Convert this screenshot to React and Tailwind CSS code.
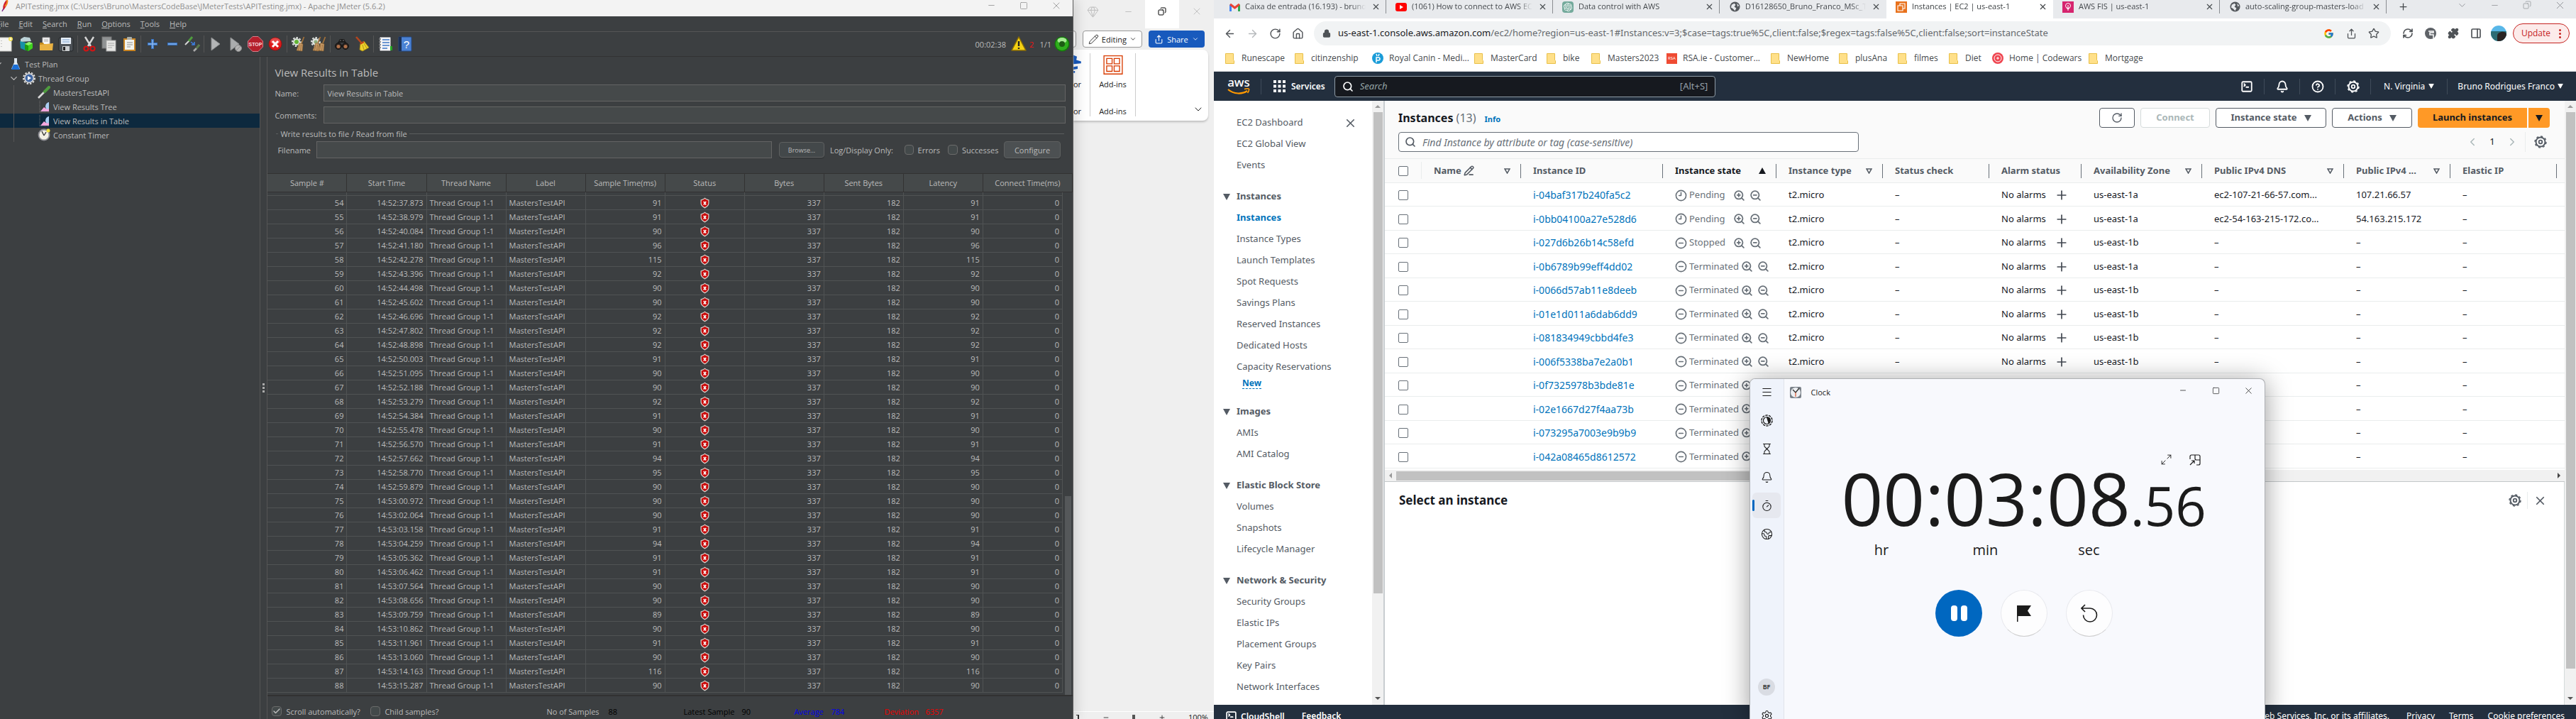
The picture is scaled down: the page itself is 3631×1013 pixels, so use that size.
import {
  ArrowLeft, ArrowRight, RotateCw, House, Lock, Star, Share, Puzzle, PanelRight, Search, Bell, CircleHelp,
  Clock9, CircleMinus, ZoomIn, ZoomOut, Plus, X, Minus, ChevronDown, ChevronLeft, ChevronRight, Copy, Pencil,
  PencilLine, Gem, Hourglass, Timer, Settings, Menu, RefreshCw, Square, SquareTerminal, Check, Maximize2, Earth,
} from "lucide-react";
import { FcGoogle } from "react-icons/fc";
import { SiOpenai } from "react-icons/si";

/* ---------- JMeter ---------- */

const samples = [
  [54, "14:52:37.873", 91], [55, "14:52:38.979", 91], [56, "14:52:40.084", 90], [57, "14:52:41.180", 96],
  [58, "14:52:42.278", 115], [59, "14:52:43.396", 92], [60, "14:52:44.498", 90], [61, "14:52:45.602", 90],
  [62, "14:52:46.696", 92], [63, "14:52:47.802", 92], [64, "14:52:48.898", 92], [65, "14:52:50.003", 91],
  [66, "14:52:51.095", 90], [67, "14:52:52.188", 90], [68, "14:52:53.279", 92], [69, "14:52:54.384", 91],
  [70, "14:52:55.478", 90], [71, "14:52:56.570", 91], [72, "14:52:57.662", 94], [73, "14:52:58.770", 95],
  [74, "14:52:59.879", 90], [75, "14:53:00.972", 90], [76, "14:53:02.064", 90], [77, "14:53:03.158", 91],
  [78, "14:53:04.259", 94], [79, "14:53:05.362", 91], [80, "14:53:06.462", 91], [81, "14:53:07.564", 90],
  [82, "14:53:08.656", 90], [83, "14:53:09.759", 89], [84, "14:53:10.862", 90], [85, "14:53:11.961", 91],
  [86, "14:53:13.060", 90], [87, "14:53:14.163", 116], [88, "14:53:15.287", 90],
];

const sampleColumns = ["Sample #", "Start Time", "Thread Name", "Label", "Sample Time(ms)", "Status", "Bytes", "Sent Bytes", "Latency", "Connect Time(ms)"];

const Svg = ({ children, size = 22, box = 22 }) => (
  <svg width={size} height={size} viewBox={`0 0 ${box} ${box}`} fill="none" aria-hidden="true">{children}</svg>
);

const Broom = ({ x = 0 }) => (
  <g transform={`translate(${x} 0)`}>
    <path d="M18.500 1 L15 10" stroke="#a0703a" strokeWidth="1.800" />
    <path d="M12 9.500 L17 11 L16 21 L8 20 Z" fill="#c89a66" stroke="#8a5f2c" strokeWidth=".6" />
    <path d="M12 12 L10.500 20 M14.500 12 L13.500 20.500" stroke="#8a5f2c" strokeWidth=".7" />
  </g>
);

const GearShape = ({ cx, cy, r, fill }) => (
  <g>
    <circle cx={cx} cy={cy} r={r - 1} fill={fill} />
    <circle cx={cx} cy={cy} r={r} stroke={fill} strokeWidth="2" strokeDasharray="2.500 2" fill="none" />
  </g>
);

const toolIcons = {
  New: <Svg><rect x="1" y="2" width="17" height="19" fill="#f4f4f2" stroke="#c9c9c4" /><circle cx="17" cy="4" r="3" fill="#f3e25a" /><circle cx="17" cy="4" r="1.300" fill="#fffce0" /><path d="M4 6v1M4 10v1M4 14v1" stroke="#999" /></Svg>,
  Templates: <Svg><path d="M3 4 L8 1 L16 2 L18 7 L3 8Z" fill="#bcd3d8" /><path d="M2 7 L10 9 V20 L3 17Z" fill="#1791a8" /><path d="M9 11 L15 8 L20 10 L20 17 L14 21 L9 19Z" fill="#3fd21f" /><path d="M9 11 L14 13 V21 L9 19Z" fill="#1f9a12" /><path d="M9 11 L15 8 L20 10 L14 13Z" fill="#8df06c" /></Svg>,
  Open: <Svg><path d="M6 2 H16 V12 H6Z" fill="#f6f6f6" stroke="#b9b9b9" /><path d="M8 5h6M8 7h6" stroke="#aaa" /><path d="M2 9 H7 L8 11 H20 V20 H2Z" fill="#c48a1c" /><path d="M2 12 L21 10 L20 20 H2Z" fill="#e9b243" /></Svg>,
  Save: <Svg><rect x="1" y="2" width="20" height="19" rx="2" fill="#4d5257" stroke="#25282b" /><rect x="4" y="2" width="14" height="9" fill="#e7eef6" /><path d="M6 5h10M6 8h10" stroke="#7ba0cd" /><rect x="6" y="14" width="10" height="7" fill="#c9ccce" /><rect x="7" y="15" width="3" height="5" fill="#222" /></Svg>,
  Cut: <Svg><path d="M5 1 L13 14 M17 1 L9 14" stroke="#d7d7d7" strokeWidth="2.400" /><circle cx="6.500" cy="17.500" r="3" stroke="#d41414" strokeWidth="2.200" /><circle cx="15.500" cy="17.500" r="3" stroke="#d41414" strokeWidth="2.200" /></Svg>,
  Copy: <Svg><rect x="1" y="1" width="13" height="16" fill="#8f9293" stroke="#777" /><rect x="7" y="6" width="13" height="15" fill="#e8e8e6" stroke="#aaa" /><path d="M9 10h9M9 13h9M9 16h6" stroke="#a5a5a5" /></Svg>,
  Paste: <Svg><rect x="3" y="3" width="17" height="18" fill="#c98422" /><rect x="5" y="5" width="13" height="14" fill="#f3f3ee" /><rect x="8" y="1" width="7" height="4" rx="1" fill="#a9aca5" /><path d="M8 9h8M8 12h8M8 15h5" stroke="#8b8b8b" /></Svg>,
  Expand: <Svg><path d="M11 4v14M4 11h14" stroke="#3570be" strokeWidth="4" /><path d="M11 5v12M5 11h12" stroke="#8db8ee" strokeWidth="1.400" /></Svg>,
  Collapse: <Svg><path d="M4 11h14" stroke="#3570be" strokeWidth="4" /><path d="M5 11h12" stroke="#8db8ee" strokeWidth="1.400" /></Svg>,
  Toggle: <Svg><path d="M1 12 L7 6" stroke="#d6d6d6" strokeWidth="2" /><path d="M6 7 L11 1" stroke="#4f9c3f" strokeWidth="3" /><path d="M9 8 L14 12 M14 8v4h-4" stroke="#3d7fe0" strokeWidth="1.600" /><path d="M13 21 L17 17" stroke="#a9a9a9" strokeWidth="2.600" /><path d="M17 17 L21 12" stroke="#5b7b4c" strokeWidth="3" /></Svg>,
  Start: <Svg><path d="M5 2 L17 11 L5 20Z" fill="#b3b5b6" stroke="#8e9091" /></Svg>,
  "Start no pauses": <Svg><path d="M4 2 L16 11 L4 20Z" fill="#aaacad" stroke="#8e9091" /><circle cx="15" cy="17" r="4.500" fill="#b4b4b4" stroke="#8c8c8c" /><path d="M12 20 L18 14" stroke="#8c8c8c" /></Svg>,
  Stop: <Svg><path d="M7 0.500 H15 L21.500 7 V15 L15 21.500 H7 L0.500 15 V7Z" fill="#b51f2c" stroke="#d6808a" /><text x="11" y="14" textAnchor="middle" fontSize="7" fontWeight="700" fontFamily="Liberation Sans" fill="#f6dfe1">STOP</text></Svg>,
  Shutdown: <Svg><circle cx="11" cy="11" r="9" fill="#dc1b1b" stroke="#9e0f0f" /><ellipse cx="11" cy="7" rx="7" ry="4.500" fill="#ef6a6a" opacity=".6" /><path d="M7 7 L15 15 M15 7 L7 15" stroke="#fff" strokeWidth="3" /></Svg>,
  Clear: <Svg><GearShape cx={8} cy={8} r={6} fill="#dfe3df" /><circle cx="8" cy="8" r="3" fill="#62b334" /><Broom /></Svg>,
  "Clear all": <Svg><GearShape cx={7} cy={8} r={6} fill="#dfe3df" /><circle cx="7" cy="8" r="2.500" fill="#8fae7c" /><Broom x={-5} /><Broom x={2} /></Svg>,
  Search: <Svg><circle cx="6" cy="14" r="4.500" fill="#2a2320" stroke="#111" /><circle cx="16" cy="14" r="4.500" fill="#2a2320" stroke="#111" /><circle cx="6" cy="14.500" r="2.500" fill="#b0714a" /><circle cx="16" cy="14.500" r="2.500" fill="#b0714a" /><path d="M5 9 L8 4 H14 L17 9Z" fill="#1c1c1c" /><path d="M8 6h2M12 6h2" stroke="#777" /></Svg>,
  "Reset search": <Svg><path d="M3 1 L11 10" stroke="#b3451f" strokeWidth="2.600" /><path d="M9 10 L14 7 L21 16 L12 21 L8 19Z" fill="#efd12d" stroke="#a88c0a" strokeWidth=".8" /><path d="M9 11 L14 8" stroke="#c4311b" strokeWidth="1.600" /><path d="M12 12l2 7M14 10l4 7" stroke="#b39a12" /></Svg>,
  Functions: <Svg><rect x="3" y="1" width="16" height="20" fill="#f5f5f7" stroke="#33363c" /><path d="M7 5h10M7 9h10M7 13h10M7 17h7" stroke="#3f78c6" strokeWidth="1.400" /><path d="M2 4h3M2 8h3M2 12h3M2 16h3" stroke="#777" strokeWidth="1.500" /><rect x="18" y="14" width="3" height="6" fill="#23a421" /></Svg>,
  Help: <Svg><rect x="2" y="1" width="18" height="20" rx="1" fill="#4b82d4" stroke="#254a86" /><rect x="2" y="1" width="4" height="20" fill="#1c3156" /><text x="13" y="17" textAnchor="middle" fontSize="15" fontFamily="Liberation Sans" fill="#fff">?</text></Svg>,
};

const toolGroups = [
  ["New", "Templates", "Open", "Save"], ["Cut", "Copy", "Paste"], ["Expand", "Collapse", "Toggle"],
  ["Start", "Start no pauses", "Stop", "Shutdown"], ["Clear", "Clear all"], ["Search", "Reset search"], ["Functions", "Help"],
];

const FailIcon = () => (
  <svg className="mx-auto block" width="13" height="16" viewBox="0 0 13 16" aria-label="failed">
    <path d="M6.500 .5 L8.500 2 L12.500 3.500 V8 C12.500 12 9 14 6.500 15.500 C4 14 .5 12 .5 8 V3.500 L4.500 2Z" fill="#d5cfca" />
    <path d="M6.500 2 L8.500 3.300 L11.300 4.500 V8 C11.300 11 8.500 13 6.500 14 C4.500 13 1.700 11 1.700 8 V4.500 L4.500 3.300Z" fill="#c80a0a" />
    <path d="M4.800 6 L8.200 10.500 M8.200 6 L4.800 10.500" stroke="#fff" strokeWidth="1.500" />
  </svg>
);

const ListenerIcon = () => (
  <Svg size={18} box={18}><path d="M3 1v16h14" stroke="#777" strokeDasharray="1 1" /><path d="M4 16 L9 10 L12 12 L16 9 V16Z" fill="#f2a6dd" /><path d="M11 10 C11 5 14 3 16 3 V12 L13 13Z" fill="#a9cdf2" /></Svg>
);

const treeItems = [
  { label: "Test Plan", pad: "pl-0", open: true, icon: <Svg size={18} box={18}><path d="M7 1 H11 V7 L15 16 H3 L7 7Z" fill="#dfe8f0" /><path d="M6 10 H12 L15 17 H3Z" fill="#1b6fd6" /></Svg> },
  { label: "Thread Group", pad: "pl-[12px]", open: true, icon: <Svg size={20} box={20}><GearShape cx={10} cy={10} r={8} fill="#dddddd" /><circle cx="10" cy="10" r="5.500" fill="#3f66a3" /><path d="M8 7 L13 10 L8 13Z" fill="#fff" /></Svg> },
  { label: "MastersTestAPI", pad: "pl-[52px]", icon: <Svg size={18} box={18}><path d="M1 17 L11 7" stroke="#d9d9d9" strokeWidth="2.600" /><path d="M10 8 L16 2" stroke="#4f9c3f" strokeWidth="4" strokeLinecap="round" /></Svg> },
  { label: "View Results Tree", pad: "pl-[52px]", icon: <ListenerIcon /> },
  { label: "View Results in Table", pad: "pl-[52px]", icon: <ListenerIcon />, selected: true },
  { label: "Constant Timer", pad: "pl-[52px]", icon: <Svg size={18} box={18}><circle cx="9" cy="9" r="7.500" fill="#f2efe4" stroke="#8d8d94" strokeWidth="1.800" /><path d="M9 10 L6 4 M9 10 L12 5" stroke="#333" strokeWidth="1.300" /><circle cx="15" cy="3" r="2.500" fill="#f0e23a" /></Svg> },
];

const darkField = "h-6 min-w-0 flex-1 border border-[#646464] bg-[#45494a] px-1 text-[#bbbbbb] outline-none";
const darkCheck = "h-[14px] w-[14px] appearance-none rounded-sm border border-[#6b6b6b] bg-[#43494a]";

const WindowButtons = ({ className = "w-[46px]", size = 13 }) => (
  <>
    <button aria-label="Minimize" className={`${className} flex items-center justify-center`}><Minus size={size} strokeWidth={1.500} /></button>
    <button aria-label="Maximize" className={`${className} flex items-center justify-center`}><Square size={size - 1} strokeWidth={1.500} /></button>
    <button aria-label="Close" className={`${className} flex items-center justify-center`}><X size={size + 3} strokeWidth={1.200} /></button>
  </>
);

function JMeter() {
  return (
    <section className="z-10 flex min-w-0 flex-col overflow-hidden border-r border-[#5a5a5a] bg-[#3c3f41] font-['Open_Sans',sans-serif] text-[11px] leading-[15px] text-[#bbbbbb] shadow-[4px_0_16px_rgba(0,0,0,0.15)]">
      <header className="flex h-[23px] shrink-0 items-center bg-[#f3f3f3] text-[#8f8f8f]">
        <svg width="22" height="23" viewBox="0 0 22 23" fill="none" aria-hidden="true"><path d="M9 0 C12 4 9 9 5 14 C3 11 5 4 9 0Z" fill="#d0202e" /><path d="M10 0 C11 3 10 6 7 9" stroke="#f28a1e" strokeWidth="2" /><path d="M5 12 L3 16" stroke="#7b2a86" strokeWidth="1.500" /></svg>
        <h1 className="flex-1 whitespace-nowrap pb-[6px]">APITesting.jmx (C:\Users\Bruno\MastersCodeBase\JMeterTests\APITesting.jmx) - Apache JMeter (5.6.2)</h1>
        <div className="flex pb-2"><WindowButtons /></div>
      </header>
      <nav className="flex h-[22px] shrink-0 items-center gap-[14px] border-b border-[#555555]">
        {["File", "Edit", "Search", "Run", "Options", "Tools", "Help"].map((m, i) => (
          <button key={m} className={i === 0 ? "-ml-[5px]" : ""}><span className="underline">{m[0]}</span>{m.slice(1)}</button>
        ))}
      </nav>
      <div className="flex h-[35px] shrink-0 items-center border-b border-[#323232]">
        <div className="-ml-[5px] flex items-center">
          {toolGroups.map((group, g) => (
            <div key={group[0]} className="flex items-center">
              {g > 0 && <span className="mx-[2px] h-6 w-px bg-[#555555]" />}
              {group.map((t) => <button key={t} aria-label={t} className="flex w-7 justify-center">{toolIcons[t]}</button>)}
            </div>
          ))}
        </div>
        <div className="ml-auto flex items-center pr-1">
          <span>00:02:38</span>
          <span className="ml-[7px]"><Svg size={22}><path d="M11 1 L21 20 H1Z" fill="#f5d313" stroke="#8a6d06" strokeWidth="1.500" strokeLinejoin="round" /><path d="M11 7v7M11 16v2" stroke="#222" strokeWidth="2.400" /></Svg></span>
          <span className="ml-1 text-[#ee1111]">2</span>
          <span className="ml-2">1/1</span>
          <span className="ml-1"><Svg size={22}><circle cx="11" cy="11" r="10.500" fill="#157a0c" /><circle cx="11" cy="11" r="9" fill="#2fae1d" /><ellipse cx="11" cy="6" rx="6.500" ry="4" fill="#a5ea93" /><circle cx="11" cy="11" r="4" fill="#1d5c14" /></Svg></span>
        </div>
      </div>
      <div className="flex min-h-0 flex-1">
        <aside className="relative w-[24.3%] shrink-0 border-r border-[#555555]">
          <ul>
            {treeItems.map((t) => (
              <li key={t.label} className={`flex h-5 items-center ${t.pad} ${t.selected ? "bg-[#0d293e]" : ""}`}>
                {t.open && <ChevronDown className={t.label === "Test Plan" ? "-ml-[10px] mr-[7px]" : "mr-[4px]"} size={15} strokeWidth={2} />}
                <span className="mr-[3px] flex w-5 justify-center">{t.icon}</span>
                <span>{t.label}</span>
              </li>
            ))}
          </ul>
          <span className="absolute left-[19px] top-10 h-20 w-px bg-[#555555]" />
        </aside>
        <div className="flex w-[9px] shrink-0 flex-col items-center justify-center gap-[2px]">
          {[0, 1, 2].map((d) => <span key={d} className="h-[3px] w-[3px] bg-[#aaaaaa]" />)}
        </div>
        <main className="flex min-w-0 flex-1 flex-col border-l border-[#555555]">
          <h2 className="mt-[10px] pl-[10px] text-[15px] leading-[24px]">View Results in Table</h2>
          <label className="mt-[5px] flex items-center pl-[10px] pr-[10px]"><span className="w-[69px]">Name:</span><input className={darkField} defaultValue="View Results in Table" /></label>
          <label className="mt-[7px] flex items-center pl-[10px] pr-[10px]"><span className="w-[69px]">Comments:</span><input className={darkField} /></label>
          <div className="mt-[5px] flex h-[18px] items-center gap-[3px] pl-3 pr-3"><span className="h-px w-[3px] bg-[#5a5d5e]" /><span>Write results to file / Read from file</span><span className="h-px flex-1 bg-[#5a5d5e]" /></div>
          <div className="mt-[2px] flex items-center pl-[14px] pr-[17px]">
            <label htmlFor="filename" className="w-[55px]">Filename</label>
            <input id="filename" className={darkField} />
            <button className="ml-[10px] h-[22px] w-16 rounded-sm border border-[#5e6060] bg-[#43484a] text-[9px] shadow-[0_2px_0_#35383a]">Browse...</button>
            <span className="ml-2 w-[95px] whitespace-nowrap">Log/Display Only:</span>
            <label className="ml-[10px] flex w-[50px] items-center gap-[6px]"><input type="checkbox" className={darkCheck} />Errors</label>
            <label className="ml-[11px] flex w-[73px] items-center gap-[6px]"><input type="checkbox" className={darkCheck} />Successes</label>
            <button className="ml-[6px] h-6 w-20 rounded-sm border border-[#5e6060] bg-[#4c5052] shadow-[0_2px_0_#35383a]">Configure</button>
          </div>
          <div className="relative mt-[21px] border-b-2 border-[#323232] pb-[3px]">
            <table className="w-full table-fixed border-separate border-spacing-0">
              <colgroup>{sampleColumns.map((c) => <col key={c} />)}<col className="w-[14px]" /></colgroup>
              <thead>
                <tr className="h-[27px] bg-[#45494a]">
                  {sampleColumns.map((c, i) => <th key={c} colSpan={i === 9 ? 2 : 1} className="whitespace-nowrap border-b border-r border-t border-[#323232] text-center font-normal">{c}</th>)}
                </tr>
              </thead>
              <tbody>
                <tr>{sampleColumns.map((c) => <td key={c} className="h-[5px] border-b border-r border-[#505354]" />)}<td /></tr>
                {samples.map(([n, time, ms]) => (
                  <tr key={n} className="h-5 text-right [&>td]:h-5 [&>td]:whitespace-nowrap [&>td]:border-b [&>td]:border-r [&>td]:border-[#505354] [&>td]:px-1 [&>td:last-child]:border-0">
                    <td>{n}</td><td>{time}</td><td className="text-left">Thread Group 1-1</td><td className="text-left">MastersTestAPI</td>
                    <td>{ms}</td><td><FailIcon /></td><td>337</td><td>182</td><td>{ms}</td><td>0</td><td />
                  </tr>
                ))}
              </tbody>
            </table>
            <span className="absolute bottom-0 right-[2px] h-[280px] w-[9px] bg-[#55585a]" />
          </div>
          <div className="flex flex-1 items-center pl-[6px] pt-[10px]">
            <label className="flex w-[129px] items-center gap-[6px] whitespace-nowrap"><span className="relative flex"><input type="checkbox" defaultChecked className={darkCheck} /><Check className="pointer-events-none absolute left-[1px] top-[1px]" size={12} strokeWidth={3} /></span>Scroll automatically?</label>
            <label className="ml-[10px] flex w-[101px] items-center gap-[6px] whitespace-nowrap"><input type="checkbox" className={darkCheck} />Child samples?</label>
            <div className="ml-[147px] flex text-black">
              <span className="w-[87px] text-[#bbbbbb]">No of Samples</span><span className="w-[106px]">88</span>
              <span className="w-[82px]">Latest Sample</span><span className="w-[74px]">90</span>
              <span className="w-[52px] text-[#0000ee]">Average</span><span className="w-[75px] text-[#0000ee]">784</span>
              <span className="w-[58px] text-[#ee0000]">Deviation</span><span className="text-[#ee0000]">6357</span>
            </div>
          </div>
        </main>
      </div>
    </section>
  );
}

/* ---------- Word ---------- */

function Word() {
  return (
    <section className="flex min-w-0 flex-col overflow-hidden bg-[#efefef] font-['Open_Sans',sans-serif] text-[11px] leading-[15px] text-[#222222]">
      <header className="flex h-10 shrink-0 justify-end text-[#b5b5b5]">
        <span className="mr-[7px] flex w-10 items-center justify-center pb-2"><Gem size={17} strokeWidth={1.200} /></span>
        <button aria-label="Minimize" className="flex w-[47px] items-center justify-center pb-2"><Minus size={13} strokeWidth={1.500} /></button>
        <button aria-label="Restore" className="flex w-[48px] items-center justify-center bg-white pb-2 text-black"><Copy className="-scale-x-100" size={12} /></button>
        <button aria-label="Close" className="flex w-[49px] items-center justify-center pb-2"><X size={16} strokeWidth={1.200} /></button>
      </header>
      <div className="mt-[3px] flex h-6 shrink-0 justify-end gap-[9px] pr-[13px]">
        <span className="-ml-3 mr-auto w-4 rounded border border-[#999999] bg-white" />
        <button className="flex w-[85px] items-center justify-center gap-1 rounded border border-[#999999] bg-white text-[11px]"><Pencil size={15} strokeWidth={1.500} />Editing<ChevronDown size={10} /></button>
        <button className="flex w-20 items-center justify-center gap-[5px] rounded bg-[#185abd] text-[11px] text-white"><Share size={13} />Share<ChevronDown size={10} /></button>
      </div>
      <div className="mr-2 mt-[3px] flex h-[100px] shrink-0 rounded-r-lg bg-white pb-[6px] pt-[5px] shadow-[0_2px_3px_rgba(0,0,0,0.2)]">
        <div className="flex w-6 flex-col border-r border-[#cccccc] text-[11px]">
          <svg width="12" height="30" viewBox="0 0 12 30" aria-hidden="true"><path d="M0 3 L5 5 L4 10 L11 12 V15 L0 16Z M0 20 L6 19 V23 L0 24Z M0 26h2v3H0z" fill="#185abd" /></svg>
          <span className="mt-[7px] h-10">or</span><span>or</span>
        </div>
        <div className="flex w-16 flex-col items-center border-r border-[#cccccc]">
          <svg className="mt-[3px]" width="28" height="28" viewBox="0 0 28 28" fill="none" stroke="#d83b01" aria-hidden="true"><path d="M.5 .5h27v27H.5z" strokeWidth="1.400" /><path d="M4.500 4.500h8v8h-8zM15.500 4.500h8v8h-8zM4.500 15.500h8v8h-8zM15.500 15.500h8v8h-8z" strokeWidth="1.400" /></svg>
          <span className="mt-[6px] h-10">Add-ins</span><span>Add-ins</span>
        </div>
        <button aria-label="Collapse ribbon" className="ml-auto mr-[6px] self-end pb-[2px]"><ChevronDown size={16} strokeWidth={1.500} /></button>
      </div>
      <div className="flex-1" />
      <footer className="flex h-[11px] shrink-0 items-start justify-between overflow-hidden border-t border-white pl-1 pr-2">
        <span className="mt-1 h-2 w-1 border-r-2 border-t border-[#333333]" /><Minus className="mt-[3px]" size={10} /><span className="mt-1 h-2 w-1 bg-[#555555]" /><Plus className="mt-[3px]" size={10} /><span>100%</span>
      </footer>
    </section>
  );
}

/* ---------- Browser chrome ---------- */

const GlobeIcon = () => (
  <svg width="15" height="15" viewBox="0 0 16 16" aria-hidden="true"><circle cx="8" cy="8" r="7.500" fill="#55595d" /><path d="M3 5 L7 3 L9 5 L7 8 L10 10 L8 14 L5 11 L2 9Z M11 3 L14 6 L12 8Z" fill="#e8eaed" /></svg>
);

const tabs = [
  { title: "Caixa de entrada (16.193) - brunorfranco", icon: <svg width="15" height="12" viewBox="0 0 15 12" fill="none"><path d="M1.500 12V2.500" stroke="#4285f4" strokeWidth="3" /><path d="M13.500 12V2.500" stroke="#34a853" strokeWidth="3" /><path d="M1 2 L7.500 7 L14 2" stroke="#ea4335" strokeWidth="3" /></svg> },
  { title: "(1061) How to connect to AWS EC2", icon: <svg width="16" height="12" viewBox="0 0 16 12"><rect width="16" height="12" rx="3" fill="#f00" /><path d="M6 3 L11 6 L6 9Z" fill="#fff" /></svg> },
  { title: "Data control with AWS", icon: <span className="flex h-4 w-4 items-center justify-center rounded-sm bg-[#74aa9c] text-white"><SiOpenai size={12} /></span> },
  { title: "D16128650_Bruno_Franco_MSc_Thesis", icon: <GlobeIcon /> },
  { title: "Instances | EC2 | us-east-1", active: true, icon: <svg width="16" height="16" viewBox="0 0 16 16" fill="none"><rect width="16" height="16" fill="#e8711c" /><path d="M3 6h7v7H3zM6 6V3h7v7h-3" stroke="#fff" strokeWidth="1.100" /></svg> },
  { title: "AWS FIS | us-east-1", icon: <svg width="16" height="16" viewBox="0 0 16 16" fill="none"><rect width="16" height="16" fill="#d6246e" /><circle cx="8" cy="6" r="3.500" stroke="#fff" /><path d="M8 5v8M5.500 9 L8 11 L10.500 9" stroke="#fff" /></svg> },
  { title: "auto-scaling-group-masters-load", icon: <GlobeIcon /> },
];

const Folder = () => (
  <svg width="13" height="15" viewBox="0 0 13 15" aria-hidden="true"><path d="M.5 .5h11v9l1 1v4H.5z" fill="#ffe08a" stroke="#e8bf47" /></svg>
);

const bookmarks = [
  ["Runescape", 0, "w-[98px]"], ["citinzenship", 0, "w-[109px]"],
  ["Royal Canin - Medi...", <svg width="16" height="16" viewBox="0 0 16 16" fill="none"><circle cx="8" cy="8" r="8" fill="#1a9cd8" /><path d="M6 14V7h3a2 2 0 010 4H6M6 2l1 3M10 2L9 5" stroke="#fff" strokeWidth="1.500" /></svg>, "w-[144px]"],
  ["MasterCard", 0, "w-[102px]"], ["bike", 0, "w-[63px]"], ["Masters2023", 0, "w-[106px]"],
  ["RSA.ie - Customer...", <span className="flex h-[15px] w-[15px] items-center justify-center bg-[#ef4b33] text-[6px] text-white">RSA</span>, "w-[147px]"],
  ["NewHome", 0, "w-[96px]"], ["plusAna", 0, "w-[83px]"], ["filmes", 0, "w-[72px]"], ["Diet", 0, "w-[61px]"],
  ["Home | Codewars", <svg width="16" height="16" viewBox="0 0 16 16" fill="none"><circle cx="8" cy="8" r="8" fill="#ef4550" /><path d="M8 3a5 5 0 015 5M13 8a5 5 0 01-5 5M8 13a5 5 0 01-5-5M3 8a5 5 0 015-5M8 6v4M6 8h4" stroke="#fff" /></svg>, "w-[136px]"],
  ["Mortgage", 0, "w-[90px]"],
];

function BrowserChrome() {
  return (
    <div className="shrink-0 bg-white font-['Open_Sans',sans-serif] text-[11px] text-[#45494d]">
      <div className="flex h-[26px] bg-[#e8eaed] pl-[8px]">
        {tabs.map((t, i) => (
          <div key={t.title} className={`relative flex w-[235px] shrink-0 items-center pb-[7px] pl-[13px] ${t.active ? "bg-white text-[#3c4043]" : ""}`}>
            <span className="flex w-4 shrink-0 justify-center">{t.icon}</span>
            <span className="ml-[7px] w-[170px] overflow-hidden whitespace-nowrap [mask-image:linear-gradient(to_right,black_88%,transparent)]">{t.title}</span>
            <button aria-label="Close tab" className="ml-2"><X size={13} strokeWidth={2} /></button>
            {i !== 3 && i !== 4 && <span className="absolute right-0 top-0 h-[19px] w-px bg-[#8a8d91]" />}
          </div>
        ))}
        <button aria-label="New tab" className="ml-4 pb-[7px]"><Plus size={15} strokeWidth={2} /></button>
        <div className="ml-auto flex pb-[12px] text-[#85888c]">
          <button aria-label="Search tabs" className="flex w-[46px] items-center justify-center"><ChevronDown size={15} strokeWidth={1.300} /></button>
          <button aria-label="Minimize" className="flex w-[46px] items-center justify-center"><Minus size={13} strokeWidth={1.300} /></button>
          <button aria-label="Restore" className="flex w-[46px] items-center justify-center"><Copy className="-scale-x-100" size={12} strokeWidth={1.300} /></button>
          <button aria-label="Close" className="flex w-[46px] items-center justify-center"><X size={17} strokeWidth={1.200} /></button>
        </div>
      </div>
      <div className="flex h-[42px] items-center pl-[6px] pr-[9px] text-[#4f5357]">
        {[[ArrowLeft, "Back"], [ArrowRight, "Forward"], [RotateCw, "Reload"], [House, "Home"]].map(([I, l]) => (
          <button key={l} aria-label={l} className={`flex w-8 justify-center ${l === "Forward" ? "text-[#b5b8bb]" : ""}`}><I size={17} strokeWidth={2} /></button>
        ))}
        <div className="ml-[7px] flex h-[34px] min-w-0 flex-1 items-center rounded-full bg-[#f1f3f4] pl-3 pr-2">
          <Lock size={12} strokeWidth={2.500} fill="#4f5357" />
          <p className="ml-[10px] flex-1 truncate font-['Noto_Sans',sans-serif] text-[13px] text-[#65696d]"><span className="text-[#202124]">us-east-1.console.aws.amazon.com</span>/ec2/home?region=us-east-1#Instances:v=3;$case=tags:true%5C,client:false;$regex=tags:false%5C,client:false;sort=instanceState</p>
          <span className="flex w-8 justify-center"><FcGoogle size={15} /></span>
          <button aria-label="Share" className="flex w-8 justify-center"><Share size={15} /></button>
          <button aria-label="Bookmark" className="flex w-8 justify-center"><Star size={16} /></button>
        </div>
        <span className="ml-2 flex w-8 justify-center"><RefreshCw size={16} strokeWidth={2.500} /></span>
        <span className="flex w-8 justify-center"><svg width="16" height="16" viewBox="0 0 16 16"><circle cx="8" cy="8" r="8" fill="#5f6368" /><path d="M5 5h7v2H7v3h5v5" stroke="#fff" strokeWidth="1.500" fill="none" /></svg></span>
        <span className="flex w-8 justify-center"><Puzzle size={16} fill="#4f5357" /></span>
        <span className="flex w-8 justify-center"><PanelRight size={16} strokeWidth={2.500} /></span>
        <span className="flex w-8 justify-center"><svg width="22" height="22" viewBox="0 0 22 22"><clipPath id="avatar"><circle cx="11" cy="11" r="11" /></clipPath><g clipPath="url(#avatar)"><rect width="22" height="22" fill="#58b7e8" /><rect y="8" width="22" height="14" fill="#2d6c74" /><path d="M9 22 V14 C9 9 20 6 22 12 V22Z" fill="#2b2423" /></g></svg></span>
        <button className="ml-1 flex h-7 w-20 items-center justify-center gap-3 rounded-full border border-[#c5221f] bg-[#fcebea] text-[12px] text-[#c5221f]">Update<svg width="3" height="13" viewBox="0 0 3 13" fill="#c5221f"><circle cx="1.500" cy="1.500" r="1.500" /><circle cx="1.500" cy="6.500" r="1.500" /><circle cx="1.500" cy="11.500" r="1.500" /></svg></button>
      </div>
      <nav className="flex h-[33px] items-center border-b border-[#dadce0] pb-1 pl-4">
        {bookmarks.map(([name, icon, w]) => (
          <a key={name} href="#bookmark" className={`flex shrink-0 items-center whitespace-nowrap text-[12px] ${w}`}>
            <span className={icon ? "mr-2" : "mr-[10px]"}>{icon || <Folder />}</span>{name}
          </a>
        ))}
      </nav>
    </div>
  );
}

/* ---------- AWS console ---------- */

const GearRound = ({ size = 18 }) => (
  <svg width={size} height={size} viewBox="0 0 18 18" fill="none" stroke="currentColor" aria-hidden="true">
    <circle cx="9" cy="9" r="6.500" strokeWidth="2" /><circle cx="9" cy="9" r="8" strokeWidth="1.400" strokeDasharray="3 3.280" /><circle cx="9" cy="9" r="2.300" strokeWidth="1.800" />
  </svg>
);
const Caret = ({ up, className = "" }) => (
  <svg className={className} width="10" height="9" viewBox="0 0 10 9" fill="currentColor" aria-hidden="true"><path d={up ? "M0 9 L5 0 L10 9Z" : "M0 0 H10 L5 9Z"} /></svg>
);
const SortCaret = () => (
  <svg width="9" height="8" viewBox="0 0 9 8" fill="none" stroke="currentColor" strokeWidth="1.500" aria-hidden="true"><path d="M1 1 H8 L4.500 7Z" /></svg>
);

const navDivider = "h-[22px] w-px bg-[#3f4b59]";

function AwsTopBar() {
  return (
    <header className="flex h-[41px] shrink-0 items-center bg-[#232f3e] text-[13px] text-white">
      <a href="#home" aria-label="AWS home" className="ml-[19px] flex w-8 flex-col items-center">
        <span className="h-[15px] text-[17px] font-medium leading-[13px]">aws</span>
        <svg width="32" height="10" viewBox="0 0 32 10" fill="none"><path d="M1 2 C9 9 21 9 28 4" stroke="#ff9900" strokeWidth="2.200" /><path d="M24 1.500 C27 .8 30 .5 30.500 1.500 C31 3 30 5 28.500 7" stroke="#ff9900" strokeWidth="1.600" /></svg>
      </a>
      <span className="ml-[15px] h-[22px] w-px bg-[#3f4b59]" />
      <button className="ml-[17px] flex items-center gap-2 text-[12px] font-semibold"><svg width="17" height="17" viewBox="0 0 17 17" fill="#fff"><path d="M0 0h4v4H0zM6.500 0h4v4h-4zM13 0h4v4h-4zM0 6.500h4v4H0zM6.500 6.500h4v4h-4zM13 6.500h4v4h-4zM0 13h4v4H0zM6.500 13h4v4h-4zM13 13h4v4h-4z" /></svg>Services</button>
      <div className="ml-[13px] flex h-[30px] w-[28%] items-center rounded-sm border border-[#8d9aa5] bg-[#16191f] px-[10px] text-[#95a0a8]">
        <Search className="text-white" size={16} strokeWidth={2.500} />
        <input aria-label="Search" placeholder="Search" className="ml-[9px] min-w-0 flex-1 bg-transparent text-[13px] italic outline-none placeholder:text-[#95a5a6]" />
        <span>[Alt+S]</span>
      </div>
      <div className="ml-auto flex items-center">
        {[[SquareTerminal, "CloudShell"], [Bell, "Notifications"], [CircleHelp, "Help"], [GearRound, "Settings"]].map(([I, l]) => (
          <div key={l} className="flex items-center"><button aria-label={l} className="flex w-[49px] justify-center"><I size={18} strokeWidth={2.400} /></button><span className={navDivider} /></div>
        ))}
        <button className="ml-[18px] mr-[18px] flex items-center gap-[5px] whitespace-nowrap text-[12px]">N. Virginia<Caret className="h-[7px] w-2" /></button>
        <span className={navDivider} />
        <button className="ml-[14px] mr-[18px] flex items-center gap-1 whitespace-nowrap text-[12px]">Bruno Rodrigues Franco<Caret className="h-[7px] w-2" /></button>
      </div>
    </header>
  );
}

const navGroups = [
  ["Instances", ["Instances", "Instance Types", "Launch Templates", "Spot Requests", "Savings Plans", "Reserved Instances", "Dedicated Hosts", "Capacity Reservations"]],
  ["Images", ["AMIs", "AMI Catalog"]],
  ["Elastic Block Store", ["Volumes", "Snapshots", "Lifecycle Manager"]],
  ["Network & Security", ["Security Groups", "Elastic IPs", "Placement Groups", "Key Pairs", "Network Interfaces"]],
];

const navItem = "flex h-[30px] items-center pl-8";

const VScroll = ({ thumb }) => (
  <div className="flex w-4 shrink-0 flex-col items-center bg-[#f1f1f1] text-[#555555]">
    <svg className="my-[5px] shrink-0 text-[#999999]" width="8" height="6" viewBox="0 0 8 6" fill="currentColor"><path d="M0 5 L4 1 L8 5Z" /></svg>
    <div className="flex w-full flex-1 justify-center"><span className={`w-[13px] bg-[#c1c1c1] ${thumb}`} /></div>
    <svg className="my-[6px] shrink-0" width="8" height="6" viewBox="0 0 8 6" fill="currentColor"><path d="M0 1 L4 5 L8 1Z" /></svg>
  </div>
);

function AwsSidebar() {
  return (
    <aside className="flex w-[241px] shrink-0 border-r-2 border-[#c8cdd0] bg-white text-[13px] text-[#545b64]">
      <nav className="flex-1 overflow-hidden whitespace-nowrap pt-4">
        <div className="flex items-center justify-between pr-[21px]"><a href="#dashboard" className={navItem}>EC2 Dashboard</a><button aria-label="Close navigation"><X size={19} strokeWidth={2} /></button></div>
        <a href="#global" className={navItem}>EC2 Global View</a>
        <a href="#events" className={navItem}>Events</a>
        {navGroups.map(([title, items]) => (
          <div key={title} className="mt-[14px]">
            <button className="flex h-[30px] items-center gap-[9px] pl-[13px] font-bold"><Caret />{title}</button>
            {items.map((item) => <a key={item} href="#nav" className={`${navItem} ${item === "Instances" ? "font-bold text-[#0073bb]" : ""}`}>{item}</a>)}
            {title === "Instances" && <div className="mb-[17px] flex h-4 items-center pl-10"><a href="#new" className="border-b border-dashed border-[#0073bb] text-[12px] font-bold leading-[15px] text-[#0073bb]">New</a></div>}
          </div>
        ))}
      </nav>
      <VScroll thumb="h-[83%]" />
    </aside>
  );
}

const instances = [
  ["i-04baf317b240fa5c2", "Pending", "us-east-1a", "ec2-107-21-66-57.com...", "107.21.66.57"],
  ["i-0bb04100a27e528d6", "Pending", "us-east-1a", "ec2-54-163-215-172.co...", "54.163.215.172"],
  ["i-027d6b26b14c58efd", "Stopped", "us-east-1b", "–", "–"],
  ["i-0b6789b99eff4dd02", "Terminated", "us-east-1a", "–", "–"],
  ["i-0066d57ab11e8deeb", "Terminated", "us-east-1b", "–", "–"],
  ["i-01e1d011a6dab6dd9", "Terminated", "us-east-1b", "–", "–"],
  ["i-081834949cbbd4fe3", "Terminated", "us-east-1b", "–", "–"],
  ["i-006f5338ba7e2a0b1", "Terminated", "us-east-1b", "–", "–"],
  ["i-0f7325978b3bde81e", "Terminated", "us-east-1b", "–", "–"],
  ["i-02e1667d27f4aa73b", "Terminated", "us-east-1b", "–", "–"],
  ["i-073295a7003e9b9b9", "Terminated", "us-east-1b", "–", "–"],
  ["i-042a08465d8612572", "Terminated", "us-east-1b", "–", "–"],
];

const instanceColumns = [
  ["Name", "w-[140px]", "sort"], ["Instance ID", "w-[200px]"], ["Instance state", "w-[160px]", "up"], ["Instance type", "w-[150px]", "sort"],
  ["Status check", "w-[150px]"], ["Alarm status", "w-[130px]"], ["Availability Zone", "w-[170px]", "sort"], ["Public IPv4 DNS", "w-[200px]", "sort"],
  ["Public IPv4 ...", "w-[150px]", "sort"], ["Elastic IP", "w-[150px]"],
];

const lightCheck = "block h-[14px] w-[14px] appearance-none rounded-xs border border-[#687078] bg-white";
const outlineButton = "flex h-7 items-center justify-center gap-[10px] rounded-sm border border-[#545b64] bg-white font-bold text-[#545b64]";

function InstancesPanel() {
  return (
    <div className="flex min-w-0 flex-1 flex-col">
      <div className="h-[82px] shrink-0 border-b border-[#eaeded] bg-[#fafafa] pl-[19px] pr-[21px] pt-[10px] text-[13px]">
        <div className="flex items-center">
          <h2 className="text-[16px] font-bold text-[#16191f]">Instances <span className="font-normal text-[#687078]">(13)</span></h2>
          <a href="#info" className="ml-3 mt-1 text-[11px] font-bold text-[#0073bb]">Info</a>
          <div className="ml-auto flex gap-2">
            <button aria-label="Refresh" className={`${outlineButton} w-[50px]`}><RotateCw size={16} strokeWidth={2} /></button>
            <button disabled className="h-7 w-[98px] rounded-sm border border-[#d5dbdb] bg-white font-bold text-[#aab7b8]">Connect</button>
            <button className={`${outlineButton} w-[156px]`}>Instance state<Caret /></button>
            <button className={`${outlineButton} w-[113px]`}>Actions<Caret /></button>
            <div className="flex gap-[2px] text-[#16191f]">
              <button className="h-7 w-[154px] rounded-l-sm bg-[#ff9926] font-bold">Launch instances</button>
              <button aria-label="More launch options" className="flex h-7 w-[30px] items-center justify-center rounded-r-sm bg-[#ff9926]"><Caret /></button>
            </div>
          </div>
        </div>
        <div className="mt-[6px] flex items-center text-[#545b64]">
          <div className="flex h-7 w-[40%] items-center rounded-sm border border-[#687078] bg-white px-2">
            <Search size={16} strokeWidth={2.500} />
            <input aria-label="Find instance" placeholder="Find Instance by attribute or tag (case-sensitive)" className="ml-[9px] min-w-0 flex-1 bg-transparent text-[14px] italic outline-none placeholder:text-[#687078]" />
          </div>
          <button aria-label="Previous page" className="ml-auto text-[#aab7b8]"><ChevronLeft size={18} /></button>
          <span className="w-[38px] text-center text-[#16191f]">1</span>
          <button aria-label="Next page" className="text-[#aab7b8]"><ChevronRight size={18} /></button>
          <span className="ml-[9px] h-7 w-px bg-[#eaeded]" />
          <button aria-label="Preferences" className="ml-3 mr-1"><GearRound /></button>
        </div>
      </div>
      <table className="w-full table-fixed border-separate border-spacing-0 text-[13px] text-[#16191f]">
        <colgroup><col className="w-[52px]" />{instanceColumns.map(([c, w]) => <col key={c} className={w} />)}<col /></colgroup>
        <thead>
          <tr className="h-[34px] bg-[#fafafa] text-left text-[#545b64] [&>th]:border-b [&>th]:border-[#eaeded]">
            <th className="relative pl-[19px]"><input type="checkbox" aria-label="Select all" className={lightCheck} /><span className="absolute right-0 top-1 h-6 w-px bg-[#eaeded]" /></th>
            {instanceColumns.map(([c, , mark]) => (
              <th key={c} className={`relative whitespace-nowrap pl-[17px] ${mark === "up" ? "text-[#16191f]" : ""}`}>
                <span className="flex items-center pr-[15px]">{c}{c === "Name" && <PencilLine className="ml-[3px]" size={15} strokeWidth={2.500} />}
                  {mark && <span className="ml-auto">{mark === "up" ? <Caret up /> : <SortCaret />}</span>}</span>
                <span className="absolute right-0 top-[7px] h-5 w-px bg-[#687078]" />
              </th>
            ))}
            <th />
          </tr>
        </thead>
        <tbody>
          {instances.map(([id, state, zone, dns, ip]) => {
            const StateIcon = state === "Pending" ? Clock9 : CircleMinus;
            return (
              <tr key={id} className="h-[33px] bg-white even:h-[34px] [&>td]:whitespace-nowrap [&>td]:border-b [&>td]:border-[#eaeded] [&>td]:p-0 [&>td]:pl-[17px] [&>td]:pt-[2px]">
                <td className="!pl-[19px]"><input type="checkbox" aria-label={`Select ${id}`} className={lightCheck} /></td>
                <td />
                <td><a href="#instance" className="text-[14px] text-[#0073bb]">{id}</a></td>
                <td>
                  <span className="flex items-center text-[#687078]">
                    <StateIcon size={17} strokeWidth={2.300} /><span className={`ml-[3px] ${state === "Terminated" ? "w-[73px]" : "w-[62px]"}`}>{state}</span>
                    <ZoomIn size={17} strokeWidth={2.500} /><ZoomOut className="ml-[6px]" size={17} strokeWidth={2.500} />
                  </span>
                </td>
                <td>t2.micro</td><td>–</td>
                <td><span className="flex items-center">No alarms<Plus className="ml-3 text-[#414750]" size={20} strokeWidth={2} /></span></td>
                <td>{zone}</td><td>{dns}</td><td>{ip}</td><td>–</td><td />
              </tr>
            );
          })}
        </tbody>
      </table>
      <div className="mt-[2px] flex h-[17px] shrink-0 items-center border-b border-[#c3c7c9] bg-[#f1f1f1]">
        <svg className="mx-[5px]" width="6" height="8" viewBox="0 0 6 8" fill="#999999"><path d="M5 0 L1 4 L5 8Z" /></svg>
        <span className="h-[13px] w-[62%] bg-[#c1c1c1]" />
        <svg className="ml-auto mr-[5px]" width="6" height="8" viewBox="0 0 6 8" fill="#444444"><path d="M1 0 L5 4 L1 8Z" /></svg>
      </div>
      <div className="flex flex-1 items-start border-r border-[#d5dbdb] bg-white pl-5 pr-[24px] pt-[14px] text-[#545b64]">
        <h2 className="text-[17px] font-bold leading-6 text-[#16191f]">Select an instance</h2>
        <div className="ml-auto flex items-center"><button aria-label="Panel preferences"><GearRound /></button><span className="mx-2 h-6 w-px bg-[#eaeded]" /><button aria-label="Close panel"><X size={19} strokeWidth={2.200} /></button></div>
      </div>
    </div>
  );
}

/* ---------- Clock ---------- */

function ClockWindow() {
  return (
    <section className="absolute bottom-0 left-[39.3%] top-[533px] flex w-[37.9%] overflow-hidden rounded-t-lg border border-b-0 border-[#aeb0b4] bg-[#f8f9fd] font-['Open_Sans',sans-serif] text-[#1b1b1b] shadow-[0_4px_36px_rgba(0,0,0,0.4)]">
      <nav className="flex w-12 shrink-0 flex-col items-center border-r border-[#e1e4ea] bg-[#eff3fb]">
        {[[Menu, "Menu"], [null, "Focus"], [Hourglass, "Timer"], [Bell, "Alarm"], [Timer, "Stopwatch"], [Earth, "World clock"]].map(([I, l]) => (
          <button key={l} aria-label={l} className={`relative flex w-10 shrink-0 items-center justify-center rounded-md ${l === "Menu" ? "h-9" : "mt-1 h-9"} ${l === "Stopwatch" ? "bg-[#e6e8ef]" : ""}`}>
            {l === "Stopwatch" && <span className="absolute left-0 h-4 w-[3px] rounded bg-[#0067c0]" />}
            {I ? <I size={17} strokeWidth={1.500} /> : <svg width="17" height="17" viewBox="0 0 17 17" fill="none"><circle cx="8.500" cy="8.500" r="7.500" stroke="#1b1b1b" strokeWidth="1.400" strokeDasharray="3.500 1.200" /><circle cx="8.500" cy="8.500" r="5" stroke="#1b1b1b" strokeWidth="1.200" /><path d="M8.500 4 A4.500 4.500 0 0 1 11 12Z" fill="#1b1b1b" stroke="#1b1b1b" /></svg>}
          </button>
        ))}
        <span className="mb-[20px] mt-auto flex h-6 w-6 shrink-0 items-center justify-center rounded-full bg-[#d9dce3] text-[9px] font-semibold">BF</span>
        <button aria-label="Settings" className="-mb-[4px] shrink-0"><Settings size={17} strokeWidth={1.500} /></button>
      </nav>
      <div className="flex min-w-0 flex-1 flex-col">
        <header className="flex h-8 items-center">
          <svg className="ml-2 mt-[6px]" width="16" height="16" viewBox="0 0 16 16" fill="none"><rect width="16" height="16" rx="2" fill="#7a8189" /><circle cx="8" cy="8" r="7" fill="#eceff2" /><path d="M4 4 L8 8 L13 2" stroke="#333" strokeWidth="1.400" /><path d="M8 8v6" stroke="#e0562b" strokeWidth="1.200" /></svg>
          <h2 className="ml-[14px] mt-[6px] flex-1 text-[11px]">Clock</h2>
          <WindowButtons size={12} />
        </header>
        <div className="mx-auto mt-[73px] flex w-[516px] flex-col">
          <div className="flex justify-end gap-6 pr-[9px]"><button aria-label="Expand"><Maximize2 size={17} strokeWidth={1.300} /></button>
            <button aria-label="Keep on top"><svg width="16" height="16" viewBox="0 0 16 16" fill="none" stroke="#1b1b1b" strokeWidth="1.200"><path d="M1 7V3a2 2 0 012-2h10a2 2 0 012 2v10a2 2 0 01-2 2h-3M8 1v5a2 2 0 002 2h5M1 15l6-6M3 9h4v4" /></svg></button></div>
          <div className="flex items-baseline whitespace-nowrap leading-[90px]" role="timer"><span className="text-[103px]">00:03:08</span><span className="text-[76px]">.56</span></div>
          <div className="mt-[2px] flex text-[20px] leading-8">
            <span className="w-[113px] text-center">hr</span><span className="ml-[34px] w-[112px] text-center">min</span><span className="ml-[34px] w-[112px] text-center">sec</span>
          </div>
        </div>
        <div className="mt-[40px] flex justify-center gap-[26px]">
          <button aria-label="Pause" className="flex h-[66px] w-[66px] items-center justify-center gap-[5px] rounded-full bg-[#0067c0]"><span className="h-[22px] w-[9px] rounded-sm bg-white" /><span className="h-[22px] w-[9px] rounded-sm bg-white" /></button>
          <button aria-label="Lap" className="flex h-[66px] w-[66px] items-center justify-center rounded-full border border-[#e8e9ee] border-b-[#cccccc] bg-[#fdfdfe]"><svg width="22" height="24" viewBox="0 0 22 24"><path d="M1 1 H21 L16 8.500 L21 16 H2.500 V24 H1Z" fill="#1b1b1b" /></svg></button>
          <button aria-label="Reset" className="flex h-[66px] w-[66px] items-center justify-center rounded-full border border-[#e8e9ee] border-b-[#cccccc] bg-[#fdfdfe]"><svg width="24" height="26" viewBox="0 0 24 26" fill="none" stroke="#1b1b1b" strokeWidth="1.600"><path d="M6 1 L1 6 L6 11 M1 6 H13 A9.500 9.500 0 1 1 3.500 15.500" /></svg></button>
        </div>
      </div>
    </section>
  );
}

function Browser() {
  return (
    <section className="relative flex min-w-0 flex-col overflow-hidden bg-white">
      <BrowserChrome />
      <div className="flex min-h-0 flex-1 flex-col font-['Noto_Sans',sans-serif]">
        <AwsTopBar />
        <div className="flex min-h-0 flex-1"><AwsSidebar /><InstancesPanel /><VScroll thumb="h-[96%]" /></div>
        <footer className="flex h-5 shrink-0 items-start whitespace-nowrap bg-[#232f3e] pl-4 pr-4 pt-[8px] text-[12px] leading-4 text-white">
          <button className="flex items-center gap-[5px] font-semibold"><SquareTerminal size={17} strokeWidth={2.400} />CloudShell</button>
          <a href="#feedback" className="ml-6 font-semibold">Feedback</a>
          <span className="ml-auto">© 2023, Amazon Web Services, Inc. or its affiliates.</span>
          <a href="#privacy" className="ml-6">Privacy</a><a href="#terms" className="ml-5">Terms</a><a href="#cookies" className="ml-5">Cookie preferences</a>
        </footer>
      </div>
      <ClockWindow />
    </section>
  );
}

export default function App() {
  return (
    <div className="grid h-screen grid-cols-[1513fr_198fr_1920fr] grid-rows-[minmax(0,1fr)] overflow-hidden">
      <JMeter />
      <Word />
      <Browser />
    </div>
  );
}
